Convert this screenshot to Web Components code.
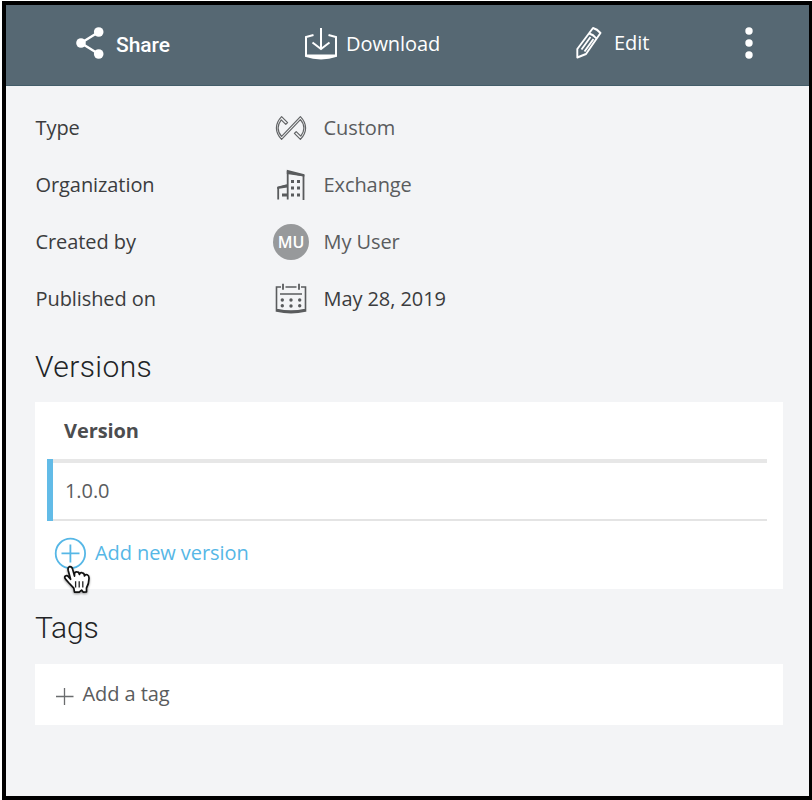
<!DOCTYPE html>
<html lang="en"><head><meta charset="utf-8"><title>Asset details</title>
<style>
html{background:#fff}
body{margin:0;padding:1px 0 0 2px;height:800px;box-sizing:border-box;overflow:hidden;font:20px/28px "Open Sans","Noto Sans",sans-serif;letter-spacing:-.08px;color:#3b3c3e}
</style></head><body>
<asset-panel></asset-panel>
<script>
const define=(name,html)=>customElements.define(name,class extends HTMLElement{
  constructor(){super();const t=document.createElement('template');t.innerHTML=html;this.attachShadow({mode:'open'}).append(t.content.cloneNode(true));}
});
const icons={
share:[30,32,'<g fill="#fff"><circle cx="5" cy="16" r="4.8"/><circle cx="22.7" cy="5" r="4.8"/><circle cx="22.7" cy="27" r="4.8"/></g><path d="M22.7 5 5 16l17.700 11" stroke="#fff" stroke-width="2.400"/>'],
download:[32,33,'<g stroke="#fff" stroke-width="2"><path d="M8.500 8 1 10v18.500M31 28.500V10l-7.500-2M16 1v21M7.500 15.500 16 22l8.500-6.500"/></g><path d="M0 27.500h32v2.300Q16 35 0 29.800Z" fill="#fff"/>'],
edit:[26,34,'<g stroke="#fff" stroke-width="1.900" stroke-linejoin="round"><path d="M17 2q4 1 7.500 5L10 28l-8.700 3.500V23ZM13.200 7.500q4 1 7.300 5M5.500 23.500 14.500 11M8.500 25.500l9-12.500"/></g>'],
more:[8,32,'<g fill="#fff"><circle cx="4" cy="4" r="3.700"/><circle cx="4" cy="16" r="3.700"/><circle cx="4" cy="28" r="3.700"/></g>'],
custom:[32,26,'<g stroke="#626466" stroke-width="1.200" stroke-linejoin="round"><path d="M6.600 1.600 12.600 7.600l-1.800 1.800-4.600-4.600Q3.100 9 3.100 13q0 4.600 3.500 8.400L25.400 1.600Q30.600 7 30.600 13t-5.200 11.400L19.400 18.400l1.800-1.800 4.600 4.600Q28.900 17 28.900 13q0-4.600-3.500-8.400L6.600 24.400Q1.400 19 1.400 13T6.600 1.600Z"/></g>'],
building:[28,32,'<path d="M10.700 30.500V3L26.500 6.500v24.500M1.200 30.500V18.500l9-2.500" stroke="#595b5d" stroke-width="1.800"/><path d="M9.800 .7 27.400 5.200v2.300L9.800 5ZM.3 18l10-2.500v3L.3 20Z" fill="#595b5d"/><path d="M14 11h3v3h-3zM20 11h3v3h-3zM14 17.500h3v3h-3zM20 17.500h3v3h-3zM14 24.500h3v3h-3zM20 24.500h3v3h-3zM5 24.500h6v3H5z" fill="#595b5d"/>'],
calendar:[32,32,'<g stroke="#595b5d" stroke-width="1.600"><path d="M6 4H1.500v24q14.500 3.500 29 0V4H26M10.500 4h11M5 11h22M2 26.500q14 3.200 28 0"/><path d="M8 .8v6M24 .8v6" stroke-width="1.800"/></g><g fill="#595b5d"><circle cx="7.300" cy="17" r="1.700"/><circle cx="16" cy="17" r="1.700"/><circle cx="24.700" cy="17" r="1.700"/><circle cx="7.300" cy="22.700" r="1.700"/><circle cx="16" cy="23" r="1.700"/><circle cx="24.700" cy="22.700" r="1.700"/></g>'],
add:[32,32,'<g stroke="#56b7e6" stroke-width="1.800"><circle cx="16.400" cy="16.400" r="14.700"/><path d="M7.500 16.400h18M16.400 7.500v18"/></g>'],
plus:[18,18,'<path d="M0 9.500h17.500M8.500 1v17" stroke="#6a6c6e" stroke-width="1.300"/>'],
pointer:[32,36,'<path d="M7.500 17.500 5 14.600Q3 12.500 4.200 11.200q1.700-1.200 3.400.7l2 2.400L7.200 5.500Q6.500 2.300 8.600 1.600q2.200-.3 2.900 2.300l2 7.200v-2.500q.5-2 2.500-1.800 2 0 2.400 2.700.6-2.200 2.900-1.700 2.200.4 2.200 3.100.6-1.700 2.700-1.100 2 .8 1.800 3.600-.1 5.600-2.500 9.600v4l-3.400.1-1.500-2-2.400 2h-4.700l-.7-4-5.300-5.600Z" fill="#fff" stroke="#111" stroke-width="1.700" stroke-linejoin="round"/><path d="M14.600 16.200v6.400M18.200 16.200v6.400M21.800 16.200v6.400" stroke="#222" stroke-width="1.300"/>']
};
customElements.define('ui-icon',class extends HTMLElement{
  constructor(){super();this.attachShadow({mode:'open'})}
  connectedCallback(){const [w,h,p]=icons[this.getAttribute('name')];
    this.shadowRoot.innerHTML=`<style>:host{display:block;flex:none;width:${w}px;height:${h}px}svg{display:block}</style><svg width="${w}" height="${h}" viewBox="0 0 ${w} ${h}" fill="none">${p}</svg>`}
});
define('tool-action',`<style>:host{display:flex;align-items:center;color:#fff;font-weight:500;white-space:nowrap}</style><slot name="icon"></slot><slot></slot>`);
define('action-bar',`<style>
:host{display:grid;grid-template-columns:229px 271px 162px 1fr;height:81px;padding-left:70px;box-sizing:border-box;background:#566873;border-bottom:1px solid #435d69;align-items:start}
.share{padding-top:22px;gap:10px;font-family:Roboto,sans-serif;font-size:21px;font-weight:500;letter-spacing:-.05px}.download{padding-top:22px;gap:9px}.edit{padding-top:21px;gap:12px}.more{padding:22px 0 0 7px}
.share span{padding-top:4px}.edit span{margin-top:-1px}
</style>
<tool-action class="share"><ui-icon slot="icon" name="share"></ui-icon><span>Share</span></tool-action>
<tool-action class="download"><ui-icon slot="icon" name="download"></ui-icon><span>Download</span></tool-action>
<tool-action class="edit"><ui-icon slot="icon" name="edit"></ui-icon><span>Edit</span></tool-action>
<tool-action class="more"><ui-icon slot="icon" name="more"></ui-icon></tool-action>`);
define('detail-row',`<style>:host{display:grid;grid-template-columns:238px 36px 1fr;height:57px;align-items:center}.i{display:flex;justify-content:center}.v{padding-left:14.500px;color:var(--value,#5a5c5e)}::slotted([slot=label]){padding-left:.5px}</style><slot name="label"></slot><div class="i"><slot name="icon"></slot></div><div class="v"><slot></slot></div>`);
define('user-badge',`<style>:host{display:flex;width:36px;height:36px;border-radius:50%;background:#97999b;color:#fff;font:600 16px/36px "Open Sans",sans-serif;justify-content:center}</style><slot></slot>`);
define('section-title',`<style>:host{display:block;font:300 30px/40px Roboto,sans-serif;letter-spacing:var(--track,.4px);color:#222426}</style><slot></slot>`);
define('content-card',`<style>:host{display:block;box-sizing:border-box;background:#fff;width:748px}</style><slot></slot>`);
define('version-table',`<style>
:host{display:block;padding:0 16px 0 12px}
.head{height:57px;box-sizing:border-box;padding-left:17px;font-weight:700;line-height:57px;color:#4c4d4f}
.row{height:62px;box-sizing:border-box;border-left:6px solid #62bbe7}.in{height:62px;box-sizing:border-box;border-top:4px solid #e7e7e7;border-bottom:2px solid #e4e4e4;padding-left:12px;line-height:56px;color:#5a5c5e}
</style><div class="head"><slot name="head"></slot></div><div class="row"><div class="in"><slot></slot></div></div>`);
define('add-action',`<style>:host{display:flex;align-items:center;position:relative}.cursor{position:absolute;left:7px;top:28px}.cursor ::slotted(*){filter:drop-shadow(0 1px 1px #0006)}</style><slot name="icon"></slot><slot></slot><div class="cursor"><slot name="cursor"></slot></div>`);
define('asset-panel',`<style>
:host{display:block;box-sizing:border-box;width:810px;height:799px;border:solid #000;border-width:4px 3px 4px 4px;background:#f3f4f6}
main{display:flow-root;padding:13px 26px 0 29px}
.first{margin-top:20px}.versions{height:187px;margin-top:15px}.second{margin-top:19px;--track:-.2px}.tags{height:61px;margin-top:16px;display:flow-root}
.new{color:#56b7e6;gap:9px;margin:16px 0 0 19px;height:32px}.tag{color:#5a5c5e;gap:9px;margin:15.500px 0 0 20.500px;height:28px}.tag ui-icon{margin-top:4px}
.date{--value:#3b3c3e}
</style>
<action-bar></action-bar>
<main>
<detail-row><span slot="label">Type</span><ui-icon slot="icon" name="custom"></ui-icon><span>Custom</span></detail-row>
<detail-row><span slot="label">Organization</span><ui-icon slot="icon" name="building"></ui-icon><span>Exchange</span></detail-row>
<detail-row><span slot="label">Created by</span><user-badge slot="icon">MU</user-badge><span>My User</span></detail-row>
<detail-row class="date"><span slot="label">Published on</span><ui-icon slot="icon" name="calendar"></ui-icon><span>May 28, 2019</span></detail-row>
<section-title class="first">Versions</section-title>
<content-card class="versions"><version-table><span slot="head">Version</span><span>1.0.0</span></version-table>
<add-action class="new"><ui-icon slot="icon" name="add"></ui-icon><span>Add new version</span><ui-icon slot="cursor" name="pointer"></ui-icon></add-action></content-card>
<section-title class="second">Tags</section-title>
<content-card class="tags"><add-action class="tag"><ui-icon slot="icon" name="plus"></ui-icon><span>Add a tag</span></add-action></content-card>
</main>`);
</script></body></html>
